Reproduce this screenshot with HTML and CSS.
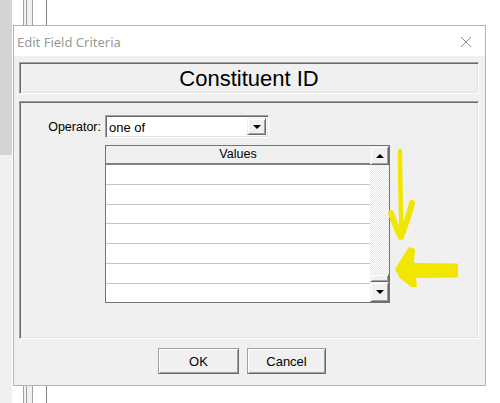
FILE: index.html
```html
<!DOCTYPE html>
<html>
<head>
<meta charset="utf-8">
<link rel="stylesheet" href="styles.css">
</head>
<body>
<div class="dialog">
  <div class="titlebar">
    <span class="title">Edit Field Criteria</span>
    <svg class="close" width="12" height="12" viewBox="0 0 12 12"><path d="M1 1 L11 11 M11 1 L1 11" stroke="#8c8c8c" stroke-width="1" fill="none"/></svg>
  </div>
  <div class="body">
    <div class="panel header-panel">Constituent ID</div>
    <div class="panel main-panel">
      <div class="form">
        <label class="label">Operator:</label>
        <div class="combo">
          <span class="combo-text">one of</span>
          <span class="btn3d combo-btn"><span class="tri-down"></span></span>
        </div>
        <div class="grid">
          <div class="grid-main">
            <div class="grid-head">Values</div>
            <div class="row"></div>
            <div class="row"></div>
            <div class="row short"></div>
            <div class="row"></div>
            <div class="row"></div>
            <div class="row"></div>
            <div class="row last"></div>
          </div>
          <div class="scroll">
            <span class="btn3d sb-up"><span class="tri-up"></span></span>
            <span class="track"></span>
            <span class="btn3d thumb"></span>
            <span class="btn3d sb-down"><span class="tri-down"></span></span>
          </div>
        </div>
      </div>
    </div>
    <div class="buttons">
      <button class="push ok">OK</button>
      <button class="push cancel">Cancel</button>
    </div>
  </div>
</div>
<svg class="marks" width="500" height="403" viewBox="0 0 500 403">
  <path d="M400 151 C 400 180, 401 210, 401.5 236" stroke="#f0e600" stroke-width="4.5" stroke-linecap="round" fill="none"/>
  <path d="M391 213 C 394 222, 397 230, 401 237 C 404 228, 408 220, 412 203" stroke="#f0e600" stroke-width="6" stroke-linecap="round" stroke-linejoin="round" fill="none"/>
  <path d="M409 247 L415 249 L414 263 L458 263.5 L458 277.5 L416 278 L417 287 L411 287 L400 278 L395 269 Z" fill="#f0e600"/>
</svg>
</body>
</html>
```
FILE: styles.css
```css
html, body {
  margin: 0;
  padding: 0;
}
body {
  width: 500px;
  height: 403px;
  position: relative;
  overflow: hidden;
  font-family: "Liberation Sans", Arial, sans-serif;
  font-size: 13px;
  color: #000;
  background:
    linear-gradient(#d4d4d4, #d4d4d4) 0 0 / 12px 155px no-repeat,
    linear-gradient(#f0f0f0, #f0f0f0) 0 155px / 12px 248px no-repeat,
    linear-gradient(to right, transparent 23px, #a0a0a0 23px 24px, #f0f0f0 24px 26px, #a0a0a0 26px 27px, #f0f0f0 27px 32px, #a0a0a0 32px 33px, transparent 33px 46px, #808080 46px 47px, transparent 47px),
    #fff;
}
.dialog {
  position: absolute;
  left: 13px;
  top: 25px;
  width: 471px;
  height: 359px;
  border: 1px solid #b4b4b4;
  background: #f0f0f0;
  display: flex;
  flex-direction: column;
}
.titlebar {
  height: 30px;
  background: #fff;
  display: flex;
  align-items: center;
  justify-content: space-between;
  padding: 0 13px 0 3px;
  flex: none;
}
.title {
  font-family: "Noto Sans", "Open Sans", sans-serif;
  font-size: 13px;
  color: #999;
  padding-top: 2px;
}
.close {
  display: block;
  margin-top: 2px;
}
.body {
  flex: 1;
  padding: 6px 6px 0 5px;
  display: flex;
  flex-direction: column;
}
.panel {
  box-sizing: border-box;
  border: 1px solid;
  border-color: #a0a0a0 #fff #fff #a0a0a0;
  box-shadow: inset 1px 1px 0 #696969, inset -1px -1px 0 #e3e3e3;
}
.header-panel {
  height: 32px;
  display: flex;
  align-items: center;
  justify-content: center;
  font-size: 22px;
  padding-top: 1px;
}
.main-panel {
  height: 238px;
  margin-top: 7px;
  padding: 13px 0 0 2px;
}
.form {
  display: grid;
  grid-template-columns: 83px 285px;
  grid-template-rows: 23px 158px;
  row-gap: 7px;
  align-items: center;
}
.label {
  text-align: right;
  padding-right: 4px;
  font-size: 12.5px;
}
.combo {
  box-sizing: border-box;
  width: 164px;
  height: 23px;
  background: #fff;
  border: 1px solid;
  border-color: #a0a0a0 #fff #fff #a0a0a0;
  box-shadow: inset 1px 1px 0 #696969, inset -1px -1px 0 #e3e3e3;
  padding: 2px 2px 2px 3px;
  display: flex;
  align-items: center;
  justify-content: space-between;
}
.combo-text {
  padding-top: 1px;
}
.btn3d {
  box-sizing: border-box;
  display: flex;
  align-items: center;
  justify-content: center;
  background: #f0f0f0;
  border: 1px solid;
  border-color: #f0f0f0 #696969 #696969 #f0f0f0;
  box-shadow: inset 1px 1px 0 #fff, inset -1px -1px 0 #a0a0a0;
}
.combo-btn {
  width: 19px;
  height: 17px;
}
.tri-down {
  width: 0;
  height: 0;
  border-left: 4px solid transparent;
  border-right: 4px solid transparent;
  border-top: 4px solid #000;
}
.tri-up {
  width: 0;
  height: 0;
  border-left: 4px solid transparent;
  border-right: 4px solid transparent;
  border-bottom: 4px solid #000;
}
.grid {
  grid-column: 2;
  box-sizing: border-box;
  width: 285px;
  height: 158px;
  border: 1px solid #737373;
  display: flex;
  align-self: start;
}
.grid-main {
  width: 264px;
  background: #fff;
  display: flex;
  flex-direction: column;
  overflow: hidden;
}
.grid-head {
  box-sizing: border-box;
  height: 19px;
  flex: none;
  background: #f0f0f0;
  border-bottom: 2px solid #808080;
  text-align: center;
  font-size: 12.5px;
  line-height: 17px;
}
.row {
  box-sizing: border-box;
  height: 20px;
  flex: none;
  border-bottom: 1px solid #c4c4c4;
}
.row.short {
  height: 19px;
}
.row.last {
  border-bottom: none;
  flex: 1;
}
.scroll {
  width: 19px;
  display: flex;
  flex-direction: column;
}
.sb-up {
  height: 19px;
  flex: none;
}
.track {
  flex: 1;
  background: repeating-conic-gradient(#fff 0 25%, #e6e6e6 0 50%) 0 0 / 2px 2px;
}
.thumb {
  height: 8px;
  flex: none;
}
.sb-down {
  height: 20px;
  flex: none;
}
.buttons {
  display: flex;
  gap: 8px;
  margin-top: 9px;
  padding-left: 139px;
}
.push {
  box-sizing: border-box;
  height: 26px;
  font-family: "Liberation Sans", Arial, sans-serif;
  font-size: 13px;
  color: #000;
  background: #f0f0f0;
  border: 1px solid;
  border-color: #a0a0a0 #696969 #696969 #a0a0a0;
  box-shadow: inset 1px 1px 0 #fff, inset -1px -1px 0 #a0a0a0;
  padding: 0;
  margin: 0;
}
.ok {
  width: 81px;
}
.cancel {
  width: 79px;
}
.marks {
  position: absolute;
  left: 0;
  top: 0;
  pointer-events: none;
}
```
